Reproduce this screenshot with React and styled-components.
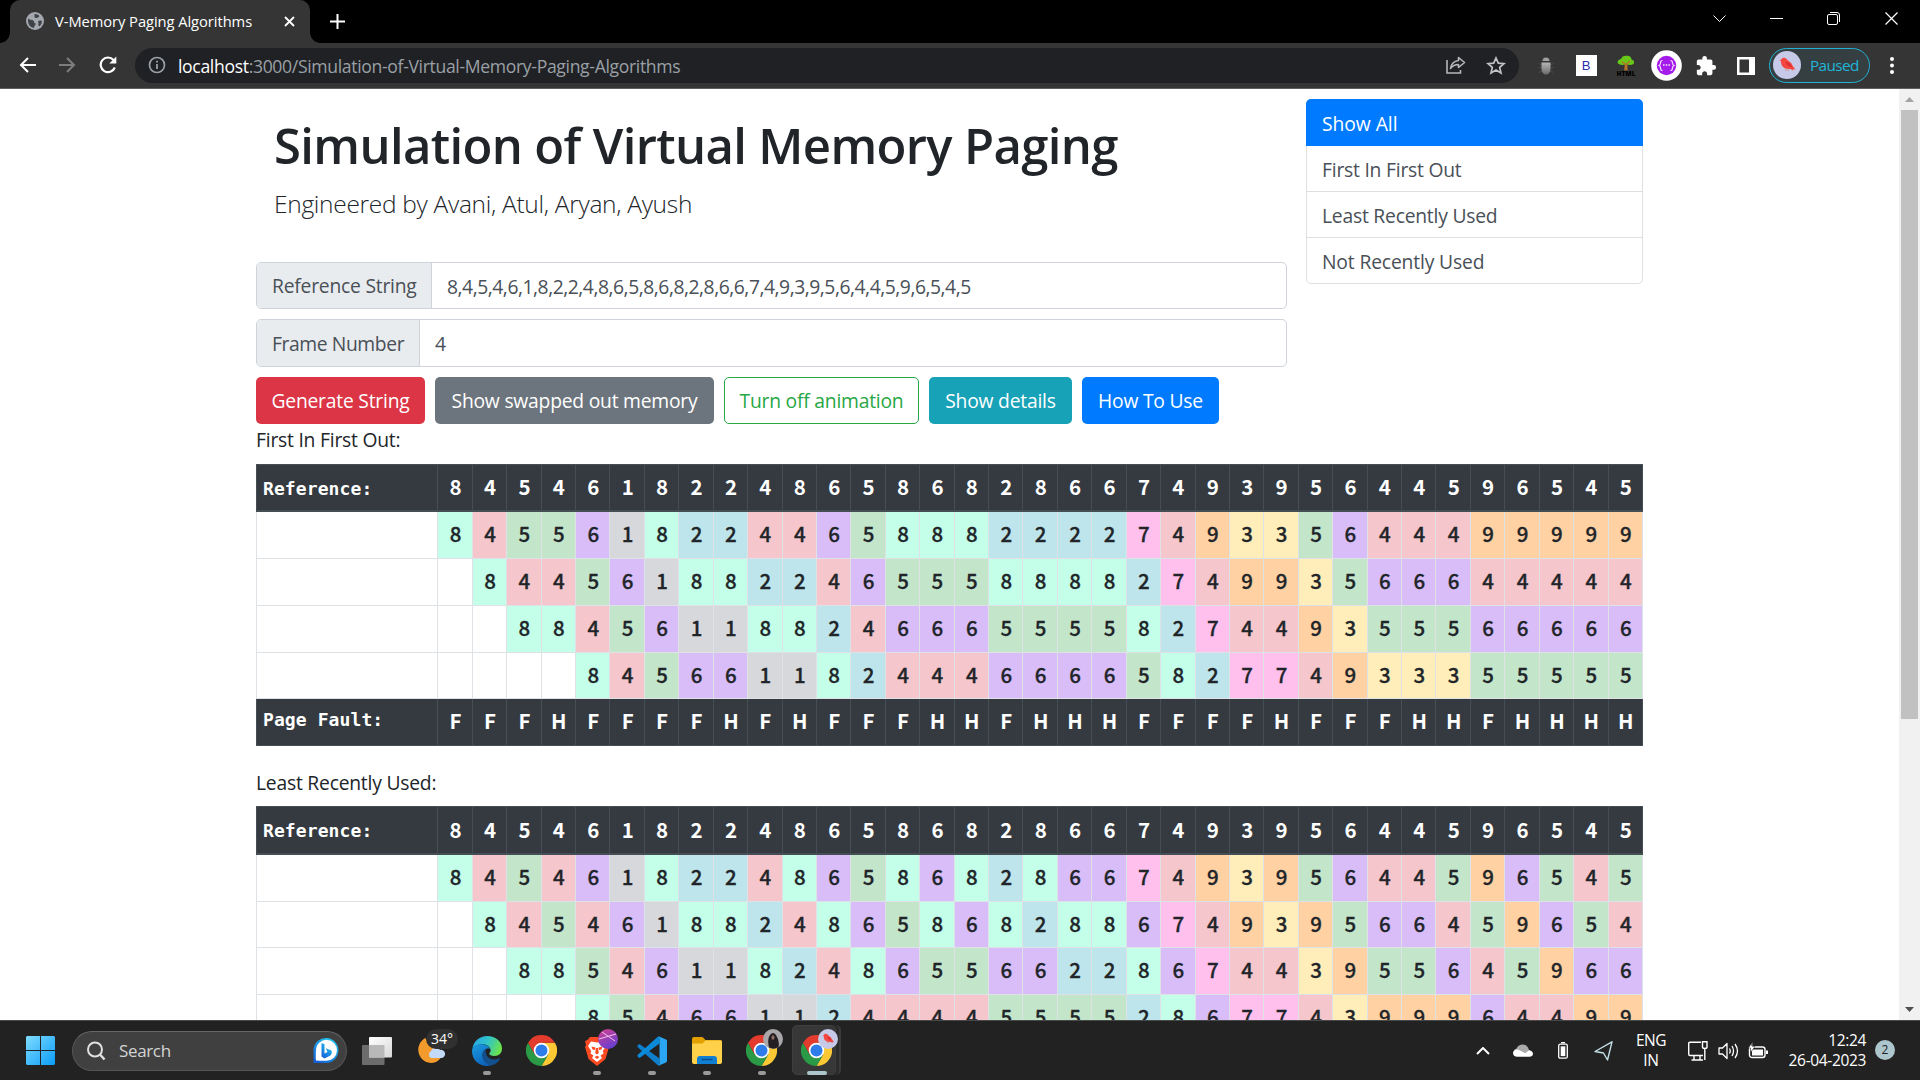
import React from "react";
import styled, { createGlobalStyle, css } from "styled-components";

const Global = createGlobalStyle`
  *, *::before, *::after { box-sizing: border-box; }
  html, body { margin: 0; padding: 0; overflow: hidden; background: #fff; }
  body { font-family: "Open Sans", "Noto Sans", sans-serif; color: #212529; }
  svg { display: block; flex: none; }
`;

const Screen = styled.div`
  width: 1920px;
  height: 1080px;
  display: flex;
  flex-direction: column;
  overflow: hidden;
`;

/* Single-line text with its own size and tracking */
const Label = styled.span`
  white-space: nowrap;
  font-size: ${(p) => p.$size || 19.3}px;
  letter-spacing: ${(p) => p.$track ?? -0.22}px;
`;

/* ---------- browser chrome ---------- */

const TabStrip = styled.div`
  height: 43px;
  background: #000;
  display: flex;
  justify-content: space-between;
  flex: none;
`;

const TabGroup = styled.div`
  display: flex;
  padding-left: 10px;
`;

const Tab = styled.div`
  width: 300px;
  height: 43px;
  background: #353535;
  border-radius: 10px 10px 0 0;
  display: flex;
  align-items: center;
  padding: 0 15px 1px 16px;
  position: relative;
  color: #fff;
  &::before, &::after {
    content: "";
    position: absolute;
    bottom: 0;
    width: 10px;
    height: 10px;
  }
  &::before { left: -10px; background: radial-gradient(circle at 0 0, #000 9.5px, #353535 10px); }
  &::after { right: -10px; background: radial-gradient(circle at 100% 0, #000 9.5px, #353535 10px); }
`;

const TabTitle = styled(Label)`
  margin-left: 11px;
  flex: 1;
`;

const NewTab = styled.div`
  width: 54px;
  display: flex;
  align-items: center;
  justify-content: center;
  padding-bottom: 1px;
`;

const WindowButtons = styled.div`
  display: flex;
  height: 37px;
`;

const WindowButton = styled.div`
  width: ${(p) => p.$w || 57}px;
  display: flex;
  align-items: center;
  justify-content: center;
`;

const Toolbar = styled.div`
  height: 46px;
  background: #353535;
  border-bottom: 1px solid #5f5f5f;
  display: flex;
  align-items: center;
  flex: none;
  padding-left: 7px;
`;

const NavButton = styled.div`
  width: 40px;
  display: flex;
  justify-content: center;
  padding-bottom: 1px;
  &:nth-child(3) { width: 42px; }
`;

const Omnibox = styled.div`
  width: 1384px;
  height: 35px;
  margin-left: 6px;
  border-radius: 18px;
  background: #202124;
  display: flex;
  align-items: center;
  padding: 0 12px 1px 13px;
`;

const Url = styled(Label)`
  margin: 1px 0 0 12px;
  flex: 1;
  color: #9aa0a6;
  b { font-weight: 400; color: #fff; }
`;

const OmniIcon = styled.div`
  width: 40px;
  display: flex;
  justify-content: center;
  &:last-child { width: 23px; margin-left: 8px; }
`;

const Extensions = styled.div`
  display: flex;
  padding-left: 7px;
`;

const Extension = styled.div`
  width: 40px;
  height: 34px;
  display: flex;
  align-items: center;
  justify-content: center;
`;

const BootstrapTile = styled.div`
  width: 21px;
  height: 21px;
  background: #fff;
  color: #2a2fb0;
  font: 400 13px/21px "Liberation Sans", sans-serif;
  text-align: center;
`;

const Profile = styled.div`
  width: 101px;
  height: 35px;
  margin-left: 3px;
  border: 1px solid #22b1d3;
  border-radius: 18px;
  background: #353f42;
  display: flex;
  align-items: center;
  padding: 0 0 1px 3px;
  color: #22b5d8;
`;

const ProfileText = styled(Label)`
  margin: 0 0 1px 9px;
`;

const MenuSlot = styled.div`
  width: 44px;
  display: flex;
  justify-content: center;
`;

/* ---------- page ---------- */

const Viewport = styled.div`
  height: 931px;
  display: flex;
  overflow: hidden;
  flex: none;
`;

const Page = styled.main`
  width: 1899px;
  padding: 10px 256px 0;
  height: 931px;
  overflow: hidden;
`;

const TopRow = styled.div`
  display: flex;
  justify-content: space-between;
  width: 1387px;
`;

const MainColumn = styled.div`
  width: 1031px;
`;

const Heading = styled.div`
  height: 163px;
  padding: 16px 0 0 18px;
`;

const Title = styled.h1`
  margin: 0;
  font-size: 49px;
  line-height: 60px;
  font-weight: 600;
  white-space: nowrap;
  letter-spacing: -0.64px;
`;

const Subtitle = styled.div`
  font-size: 24.5px;
  line-height: 36px;
  margin-top: 11px;
  font-weight: 300;
  white-space: nowrap;
  letter-spacing: -0.3px;
`;

const InputGroup = styled.div`
  display: flex;
  height: ${(p) => p.$h}px;
  margin-bottom: ${(p) => p.$gap}px;
  border: 1px solid #ced4da;
  border-radius: 5px;
  overflow: hidden;
  color: #495057;
`;

const InputLabel = styled.div`
  width: ${(p) => p.$w}px;
  background: #e9ecef;
  border-right: 1px solid #ced4da;
  display: flex;
  align-items: center;
  padding: 0 0 0 15px;
`;

const InputValue = styled.div`
  flex: 1;
  display: flex;
  align-items: center;
  padding: 1px 0 0 15px;
`;

const ButtonRow = styled.div`
  display: flex;
  gap: 10px;
`;

const Button = styled.div`
  width: ${(p) => p.$w}px;
  height: 47px;
  border-radius: 5px;
  display: flex;
  align-items: center;
  justify-content: center;
  padding-bottom: 1px;
  color: #fff;
  background: ${(p) => p.$bg};
  ${(p) =>
    p.$outline &&
    css`
      background: #fff;
      color: #28a745;
      border: 1px solid #28a745;
    `}
`;

const ListGroup = styled.div`
  width: 337px;
  height: 185px;
  border: 1px solid #dfdfdf;
  border-radius: 5px;
`;

const ListItem = styled.div`
  height: 46px;
  padding: 2px 0 0 15px;
  display: flex;
  align-items: center;
  color: #495057;
  border-bottom: 1px solid #dfdfdf;
  ${(p) =>
    p.$active &&
    css`
      height: 47px;
      margin: -1px -1px 0;
      padding-left: 16px;
      background: #007bff;
      color: #fff;
      border-color: #007bff;
      border-radius: 5px 5px 0 0;
    `}
  &:last-child { border-bottom: 0; padding-top: 0; }
`;

const SectionTitle = styled.div`
  height: ${(p) => p.$h}px;
  padding-top: ${(p) => p.$top}px;
  line-height: 30px;
`;

const Table = styled.div`
  width: 1387px;
  border-left: 1px solid #dee2e6;
`;

const Row = styled.div`
  display: grid;
  grid-template-columns: 181.4px repeat(35, 1fr);
  height: ${(p) => p.$h}px;
  ${(p) =>
    p.$dark &&
    css`
      background: #343a40;
      color: #fff;
      margin-left: -1px;
      border-left: 1px solid #454d55;
    `}
  ${(p) => p.$head && css`border-top: 1px solid #454d55;`}
`;

const fills = {
  1: "#d6d8db",
  2: "#bee5eb",
  3: "#ffeeba",
  4: "#f5c6cb",
  5: "#c3e6cb",
  6: "#d9bdf8",
  7: "#ffc0ee",
  8: "#c3ffe9",
  9: "#ffd1a3",
};

const Cell = styled.div`
  display: flex;
  align-items: center;
  justify-content: center;
  padding: 0 0 ${(p) => (p.$thick ? 3 : 4)}px 1px;
  font: ${(p) => (p.$dark ? 700 : 500)} 20.5px/24px "Noto Sans CJK JP", "Noto Sans CJK SC", sans-serif;
  -webkit-text-stroke: ${(p) => (p.$dark ? 0 : 0.3)}px currentColor;
  background: ${(p) => fills[p.$page] || "transparent"};
  border-right: 1px solid ${(p) => (p.$dark ? "#454d55" : "#dee2e6")};
  border-bottom: ${(p) => (p.$thick ? 2 : 1)}px solid ${(p) => (p.$dark ? "#454d55" : "#dee2e6")};
`;

const RowLabel = styled(Cell)`
  justify-content: flex-start;
  padding: ${(p) => (p.$thick ? "2px 0 0 6px" : "0 0 4px 6px")};
  font: 700 18px/24px "DejaVu Sans Mono", monospace;
  letter-spacing: 0.1px;
  white-space: pre;
`;

const Scrollbar = styled.div`
  width: 21px;
  background: #f1f1f1;
  display: flex;
  flex-direction: column;
  align-items: center;
  justify-content: space-between;
`;

const ScrollArrow = styled.div`
  height: 21px;
  display: flex;
  align-items: center;
`;

const ScrollTrack = styled.div`
  flex: 1;
  width: 17px;
`;

const Thumb = styled.div`
  height: 609px;
  background: #c1c1c1;
`;

/* ---------- taskbar ---------- */

const Taskbar = styled.div`
  height: 60px;
  background: #222222;
  border-top: 1px solid #484a4a;
  display: flex;
  justify-content: space-between;
  flex: none;
`;

const TaskLeft = styled.div`
  display: flex;
  align-items: center;
  padding-left: 26px;
`;

const SearchBox = styled.div`
  width: 275px;
  height: 40px;
  margin: 0 2px 0 17px;
  border: 1px solid #555;
  border-top-color: #666;
  border-radius: 20px;
  background: #404040;
  display: flex;
  align-items: center;
  padding: 0 7px 0 13px;
  color: #d4d4d4;
`;

const SearchText = styled(Label)`
  margin-left: 13px;
  flex: 1;
`;

const TaskItem = styled.div`
  width: 55px;
  height: 59px;
  display: flex;
  align-items: center;
  justify-content: center;
  position: relative;
`;

const ActiveTile = styled.div`
  position: absolute;
  left: 3px;
  top: 4px;
  width: 49px;
  height: 50px;
  border-radius: 5px;
  background: #2b2b2b;
  border-right: 2px solid #3a3a3a;
  & + svg { position: relative; }
  &::before {
    content: "";
    position: absolute;
    left: 0;
    top: 0;
    width: 44px;
    height: 50px;
    border-radius: 5px;
    background: #373737;
    border: 1px solid #3e3e3e;
  }
`;

const Running = styled.div`
  position: absolute;
  bottom: 5px;
  left: 50%;
  transform: translateX(-50%);
  width: ${(p) => (p.$active ? 20 : 8)}px;
  height: 4px;
  border-radius: 2px;
  background: ${(p) => (p.$active ? "#adc6cd" : "#9a9a9a")};
`;

const Corner = styled.div`
  position: absolute;
  left: 29px;
  top: 8px;
`;

const WeatherBadge = styled.div`
  position: absolute;
  left: 22px;
  top: 8px;
  width: 32px;
  height: 20px;
  border-radius: 10px;
  background: #303030;
  color: #fff;
  font-size: 14px;
  line-height: 20px;
  text-align: center;
`;

const Tray = styled.div`
  display: flex;
  align-items: center;
  padding-right: 25px;
  color: #fff;
`;

const TrayIcon = styled.div`
  width: ${(p) => p.$w || 40}px;
  display: flex;
  justify-content: center;
`;

const TrayText = styled.div`
  width: ${(p) => p.$w}px;
  display: flex;
  flex-direction: column;
  align-items: ${(p) => p.$align || "center"};
  line-height: 20px;
  padding-bottom: 1px;
`;

const Notice = styled.div`
  width: 20px;
  height: 20px;
  margin: 0 0 1px 9px;
  border-radius: 50%;
  background: #adc6cd;
  color: #222;
  font-size: 12px;
  line-height: 20px;
  text-align: center;
`;

/* ---------- drawings ---------- */

const Bird = ({ size, bg = "#c6cae8" }) => (
  <svg width={size} height={size} viewBox="0 0 28 28">
    <circle cx="14" cy="14" r="14" fill={bg} />
    <path d="M6.500 9.500 L8 8.800 Q9 6.300 11.500 6.800 Q13.500 7.500 15 9.500 Q18.500 11.500 19.500 14.500 L22.500 18.500 L20 18 L20.500 19.800 L17.500 18 Q12 18.500 9.500 15.500 Q7.800 13 8 10.300 Z" fill="#f5463f" />
    <path d="M12.500 10.500 Q17.500 11.500 19 16 Q14 15.500 12.500 10.500 Z" fill="#d93036" />
    <path d="M13 18 V20 M15 18 V20" stroke="#d98a70" strokeWidth="0.800" />
  </svg>
);

const Chrome = () => (
  <svg width="31" height="31" viewBox="0 0 48 48">
    <path d="M24 12 H44.800 A24 24 0 0 1 24 48 L34.400 30 Z" fill="#fcc934" />
    <path d="M3.200 12 L13.600 30 L24 36 L34.400 30 L24 48 A24 24 0 0 1 3.200 12 Z" fill="#2b9a46" />
    <path d="M3.200 12 A24 24 0 0 1 44.800 12 H24 L13.600 30 Z" fill="#e33b2e" />
    <circle cx="24" cy="24" r="12" fill="#fff" />
    <circle cx="24" cy="24" r="9.300" fill="#2e7cea" />
  </svg>
);

const Edge = () => (
  <svg width="30" height="30" viewBox="0 0 30 30">
    <defs>
      <linearGradient id="edgeTop" x1="0" y1="0.200" x2="1" y2="0.500">
        <stop offset="0" stopColor="#27a5e8" />
        <stop offset="0.500" stopColor="#31c4c8" />
        <stop offset="1" stopColor="#6be34a" />
      </linearGradient>
      <linearGradient id="edgeSide" x1="0" y1="0" x2="0.600" y2="1">
        <stop offset="0" stopColor="#1b9de2" />
        <stop offset="1" stopColor="#0d62bb" />
      </linearGradient>
    </defs>
    <path d="M0.300 13 C1.500 5 8 0 15 0 C24 0 30 6 30 12.500 C30 17 27 20 22.500 20 C19 20 17.300 18.800 17.300 17.800 C17.300 17 18.600 16.500 18.600 14.500 C18.600 11 15 8.300 10.500 8.300 C5 8.300 1 11 0.300 13 Z" fill="url(#edgeTop)" />
    <path d="M0 15 C0 11 4 8.300 9.500 8.300 C14 8.300 17 10.500 18.300 13 C15 11.500 10.500 14 10.500 19 C10.500 24 14 28 19 29.300 C17.500 29.900 16 30 15 30 C6.500 30 0 23.500 0 15 Z" fill="url(#edgeSide)" />
    <path d="M10.500 19 C10.500 15.500 12.500 13.600 14 13 C12.500 18 16 23.500 22 23.500 C25 23.500 26.500 22.600 27.600 22.200 C28.200 22 28.400 22.600 28 23 C26 26.500 22.500 29 19 29.600 C14 28.500 10.500 24 10.500 19 Z" fill="#12508f" />
  </svg>
);

const Brave = () => (
  <svg width="26" height="30" viewBox="0 0 26 30">
    <path d="M6 1 H20 L22.500 4 L25 5 L24 9 L25 11 L21.500 23 L13 30 L4.500 23 L1 11 L2 9 L1 5 L3.500 4 Z" fill="#fb4a22" />
    <path d="M13 6.500 L19 5.600 L22 10 L18.800 15 L19.500 17.500 L16.500 19.500 L18 22 L13 26 L8 22 L9.500 19.500 L6.500 17.500 L7.200 15 L4 10 L7 5.600 Z" fill="#fff" />
    <path d="M7.500 10.500 L11.500 11.500 L11 14 L8.500 13.500 Z M18.500 10.500 L14.500 11.500 L15 14 L17.500 13.500 Z M12 12 H14 L14.800 17 L13 18.500 L11.200 17 Z M10.500 21 L13 19.800 L15.500 21 L13 23 Z" fill="#fb4a22" />
  </svg>
);

const PurpleBall = () => (
  <svg width="20" height="20" viewBox="0 0 20 20">
    <defs>
      <linearGradient id="ball" x1="0" y1="0" x2="0.500" y2="1">
        <stop offset="0" stopColor="#d6418f" />
        <stop offset="1" stopColor="#6a3fd0" />
      </linearGradient>
    </defs>
    <circle cx="10" cy="10" r="10" fill="url(#ball)" />
    <path d="M1 10 L18 5 M4 3 L17 12" stroke="#f3c2e6" strokeWidth="1" fill="none" />
  </svg>
);

const VSCode = () => (
  <svg width="30" height="30" viewBox="0 0 30 30">
    <path d="M0.500 9.500 L2.500 8 L22.500 22.500 V29.500 L20.800 29.200 L0.500 11 Z" fill="#0f7fcb" />
    <path d="M0.500 20.500 L2.500 22 L22.500 7.500 V0.500 L20.800 0.800 L0.500 19 Z" fill="#0a8ad8" />
    <path d="M21.500 0.200 L29 3.600 Q30 4 30 5 V25 Q30 26 29 26.400 L21.500 29.800 Q22.500 29 22.500 27.500 V2.500 Q22.500 1 21.500 0.200 Z" fill="#2aa6f2" />
  </svg>
);

const Folder = () => (
  <svg width="30" height="27" viewBox="0 0 30 27">
    <path d="M0 2 Q0 0 2 0 H10 Q11 0 12 1.500 L13.500 3 H28 Q30 3 30 5 V10 H0 Z" fill="#e2a100" />
    <path d="M0 6.500 H10.500 L13.500 3.500 H29 Q30 3.500 30 4.500 V25 Q30 27 28 27 H2 Q0 27 0 25 Z" fill="#ffd04a" />
    <path d="M5 27 V22 Q5 19 8 19 H22 Q25 19 25 22 V27 Z" fill="#1180d2" />
    <path d="M9.500 22.500 H20.500" stroke="#0b4f92" strokeWidth="1.500" />
  </svg>
);

const Portrait = () => (
  <svg width="20" height="20" viewBox="0 0 20 20">
    <circle cx="10" cy="10" r="10" fill="#a9a7aa" />
    <path d="M6 18.500 Q4 10 7 6 Q10 2 13 6 Q17 12 15.500 18 Q11 21 6 18.500 Z" fill="#241f22" />
    <ellipse cx="10" cy="8.500" rx="1.500" ry="2.200" fill="#8f7064" />
  </svg>
);

const Bing = () => (
  <svg width="26" height="26" viewBox="0 0 26 26">
    <defs>
      <linearGradient id="bing" x1="0.800" y1="0" x2="0.200" y2="1">
        <stop offset="0" stopColor="#22c7ee" />
        <stop offset="1" stopColor="#1560d8" />
      </linearGradient>
    </defs>
    <path d="M0.500 25 V11.500 A12.500 12.500 0 1 1 13 25 Z" fill="url(#bing)" />
    <path d="M3 22.500 Q2.500 20 3 12 A10.500 10.500 0 1 1 13 22.800 Q8 23 3 22.500 Z" fill="#fff" />
    <path d="M8.500 5 L11.500 6.200 V15.500 L14.500 14 L12.800 10.300 L18.500 12.500 Q19.500 16 17 17.800 L11.500 20.500 L8.500 18.500 Z" fill="url(#bing)" />
  </svg>
);

const Globe = () => (
  <svg width="18" height="18" viewBox="0 0 18 18">
    <circle cx="9" cy="9" r="9" fill="#a3a8ae" />
    <path d="M2 6.500 Q4 8 6.500 8 Q8.500 8.500 8 10.500 Q10 11 9.500 12.500 Q8 14 8 16 Q2.500 15 2 9 Z M8.500 2 Q12 2 13.500 4 Q12 6.500 9.500 6 Q8 5 8.500 2 Z M12 9 Q14.500 8 16 9 Q16 12 13.500 14.500 Q11.500 13 12.500 11 Z" fill="#3f4246" />
  </svg>
);

const stroke = { fill: "none", stroke: "#fff", strokeWidth: 2 };

const PuzzlePiece = () => (
  <svg width="22" height="22" viewBox="0 0 24 24" fill="#fff">
    <path d="M20.500 11H19V7c0-1.100-.900-2-2-2h-4V3.500a2.500 2.500 0 0 0-5 0V5H4c-1.100 0-1.990.900-1.990 2v3.800H3.500c1.490 0 2.700 1.210 2.700 2.700s-1.210 2.700-2.700 2.700H2V20c0 1.100.900 2 2 2h3.800v-1.500c0-1.490 1.210-2.700 2.700-2.700 1.490 0 2.700 1.210 2.700 2.700V22H17c1.100 0 2-.900 2-2v-4h1.500a2.500 2.500 0 0 0 0-5z" />
  </svg>
);

function Browser() {
  return (
    <>
      <TabStrip>
        <TabGroup>
          <Tab>
            <Globe />
            <TabTitle $size={14.7} $track={-0.05}>V-Memory Paging Algorithms</TabTitle>
            <svg width="11" height="11" viewBox="0 0 11 11"><path d="M1 1 L10 10 M10 1 L1 10" {...stroke} strokeWidth="1.800" /></svg>
          </Tab>
          <NewTab>
            <svg width="15" height="15" viewBox="0 0 15 15"><path d="M7.500 0 V15 M0 7.500 H15" {...stroke} /></svg>
          </NewTab>
        </TabGroup>
        <WindowButtons>
          <WindowButton $w={58}><svg width="13" height="7" viewBox="0 0 13 7"><path d="M0.500 0.500 L6.500 6.500 L12.500 0.500" {...stroke} strokeWidth="1" /></svg></WindowButton>
          <WindowButton><svg width="13" height="1" viewBox="0 0 13 1"><path d="M0 0.500 H13" {...stroke} strokeWidth="1" /></svg></WindowButton>
          <WindowButton>
            <svg width="13" height="13" viewBox="0 0 13 13">
              <rect x="0.500" y="2.500" width="10" height="10" rx="1.500" {...stroke} strokeWidth="1" />
              <path d="M3 0.500 H10 Q12.500 0.500 12.500 3 V10" {...stroke} strokeWidth="1" />
            </svg>
          </WindowButton>
          <WindowButton $w={58}><svg width="13" height="13" viewBox="0 0 13 13"><path d="M0.500 0.500 L12.500 12.500 M12.500 0.500 L0.500 12.500" {...stroke} strokeWidth="1.200" /></svg></WindowButton>
        </WindowButtons>
      </TabStrip>
      <Toolbar>
        <NavButton><svg width="17" height="16" viewBox="0 0 17 16"><path d="M17 8 H2 M9 1 L2 8 L9 15" {...stroke} /></svg></NavButton>
        <NavButton><svg width="17" height="16" viewBox="0 0 17 16"><path d="M0 8 H15 M8 1 L15 8 L8 15" {...stroke} stroke="#7d7d7d" /></svg></NavButton>
        <NavButton>
          <svg width="18" height="18" viewBox="0 0 18 18">
            <path d="M15.800 11.500 A7.300 7.300 0 1 1 14.500 4" {...stroke} strokeWidth="2.200" />
            <path d="M17.300 0.500 V7.500 H10.300 Z" fill="#fff" />
          </svg>
        </NavButton>
        <Omnibox>
          <svg width="18" height="18" viewBox="0 0 18 18">
            <circle cx="9" cy="9" r="7.500" fill="none" stroke="#9aa0a6" strokeWidth="1.700" />
            <path d="M9 8 V13 M9 4.800 V6.600" stroke="#9aa0a6" strokeWidth="1.800" />
          </svg>
          <Url $size={17.6} $track={-0.34}><b>localhost</b>:3000/Simulation-of-Virtual-Memory-Paging-Algorithms</Url>
          <OmniIcon>
            <svg width="20" height="18" viewBox="0 0 20 18" fill="none" stroke="#b5b7b9" strokeWidth="1.600">
              <path d="M1 4 V17 H14.500 V14" />
              <path d="M12.500 1.500 L18.500 6.500 L12.500 11.500 V8.500 Q7.500 8.500 4.500 12.500 Q5.500 5.500 12.500 4.500 Z" strokeLinejoin="round" />
            </svg>
          </OmniIcon>
          <OmniIcon>
            <svg width="20" height="19" viewBox="0 0 20 19" fill="none" stroke="#c0c2c4" strokeWidth="1.700">
              <path d="M10 2 L12.300 7.200 L18 7.700 L13.700 11.400 L15 17 L10 14 L5 17 L6.300 11.400 L2 7.700 L7.700 7.200 Z" />
            </svg>
          </OmniIcon>
        </Omnibox>
        <Extensions>
          <Extension>
            <svg width="16" height="18" viewBox="0 0 16 18">
              <defs>
                <linearGradient id="bug" x1="0" y1="0" x2="0" y2="1">
                  <stop offset="0" stopColor="#b5b5b5" />
                  <stop offset="1" stopColor="#6a6a6a" />
                </linearGradient>
              </defs>
              <path d="M0.500 6.500 L4 8 M15.500 6.500 L12 8 M0 10.500 H4 M16 10.500 H12 M1 15.500 L4 13.500 M15 15.500 L12 13.500" stroke="#484848" strokeWidth="1.200" />
              <path d="M4.500 4 A3.500 3.500 0 0 1 11.500 4 Z" fill="#a0a0a0" />
              <path d="M3.500 5.500 H12.500 V12 A4.500 5.500 0 0 1 3.500 12 Z" fill="url(#bug)" />
            </svg>
          </Extension>
          <Extension><BootstrapTile>B</BootstrapTile></Extension>
          <Extension>
            <svg width="20" height="21" viewBox="0 0 20 21">
              <path d="M2 8.500 Q0.500 5 5 4 Q6.500 0 11 0.800 Q15 0.500 15.500 4.500 Q19.500 6 17.500 9 Q14 11 10 9 Q5 11 2 8.500 Z" fill="#68c818" />
              <path d="M9 15.500 L9.500 9.500 L6 6.500 M10.800 15.500 L10.600 9 L14 6" stroke="#b6742a" strokeWidth="1.600" fill="none" />
              <text x="10" y="20.500" textAnchor="middle" fontFamily="Open Sans" fontWeight="800" fontSize="7" textLength="19" lengthAdjust="spacingAndGlyphs">HTML</text>
            </svg>
          </Extension>
          <Extension>
            <svg width="31" height="31" viewBox="0 0 31 31">
              <circle cx="15.500" cy="15.500" r="15.300" fill="#fff" />
              <circle cx="15.500" cy="15.500" r="9.700" fill="#a41bea" />
              <path d="M11.500 10.500 Q9.500 10.500 9.500 13 Q9.500 14.800 8 15.500 Q9.500 16 9.500 18 Q9.500 20.500 11.500 20.500 M19.500 10.500 Q21.500 10.500 21.500 13 Q21.500 14.800 23 15.500 Q21.500 16 21.500 18 Q21.500 20.500 19.500 20.500" stroke="#f3dcfc" strokeWidth="1.200" fill="none" />
              <path d="M12 15 H19" stroke="#f3dcfc" strokeWidth="1.500" strokeDasharray="1.600 1.100" />
            </svg>
          </Extension>
          <Extension><PuzzlePiece /></Extension>
          <Extension>
            <svg width="18" height="18" viewBox="0 0 18 18">
              <path fillRule="evenodd" d="M0 0 H18 V18 H0 Z M2.500 2.500 V15.500 H12 V2.500 Z" fill="#fff" />
            </svg>
          </Extension>
        </Extensions>
        <Profile>
          <Bird size={28} />
          <ProfileText $size={15.3} $track={-0.6}>Paused</ProfileText>
        </Profile>
        <MenuSlot>
          <svg width="4" height="17" viewBox="0 0 4 17" fill="#fff"><circle cx="2" cy="2" r="2" /><circle cx="2" cy="8.500" r="2" /><circle cx="2" cy="15" r="2" /></svg>
        </MenuSlot>
      </Toolbar>
    </>
  );
}

/* ---------- paging simulation ---------- */

const references = "8,4,5,4,6,1,8,2,2,4,8,6,5,8,6,8,2,8,6,6,7,4,9,3,9,5,6,4,4,5,9,6,5,4,5";
const pages = references.split(",");
const frameCount = 4;

function simulate(recency) {
  let frames = [];
  return pages.map((page) => {
    const hit = frames.includes(page);
    if (!hit) frames = [page, ...frames].slice(0, frameCount);
    else if (recency) frames = [page, ...frames.filter((f) => f !== page)];
    return { frames, mark: hit ? "H" : "F" };
  });
}

function PagingTable({ recency, heights }) {
  const steps = simulate(recency);
  return (
    <Table>
      <Row $h={heights[0]} $dark $head>
        <RowLabel $dark $thick>Reference:</RowLabel>
        {pages.map((p, i) => <Cell key={i} $dark $thick>{p}</Cell>)}
      </Row>
      {Array.from({ length: frameCount }, (_, f) => (
        <Row key={f} $h={heights[f + 1]}>
          <Cell />
          {steps.map((s, i) => <Cell key={i} $page={s.frames[f]}>{s.frames[f]}</Cell>)}
        </Row>
      ))}
      {heights.length > 5 && (
        <Row $h={heights[5]} $dark>
          <RowLabel $dark>Page Fault:</RowLabel>
          {steps.map((s, i) => <Cell key={i} $dark>{s.mark}</Cell>)}
        </Row>
      )}
    </Table>
  );
}

function Content() {
  return (
    <Viewport>
      <Page>
        <TopRow>
          <MainColumn>
            <Heading>
              <Title>Simulation of Virtual Memory Paging</Title>
              <Subtitle>Engineered by Avani, Atul, Aryan, Ayush</Subtitle>
            </Heading>
            <InputGroup $h={47} $gap={10}>
              <InputLabel $w={175}><Label>Reference String</Label></InputLabel>
              <InputValue><Label $track={-0.46}>{references}</Label></InputValue>
            </InputGroup>
            <InputGroup $h={48} $gap={10}>
              <InputLabel $w={163}><Label $track={-0.4}>Frame Number</Label></InputLabel>
              <InputValue><Label>4</Label></InputValue>
            </InputGroup>
            <ButtonRow>
              <Button $w={169} $bg="#dc3545"><Label>Generate String</Label></Button>
              <Button $w={279} $bg="#6c757d"><Label>Show swapped out memory</Label></Button>
              <Button $w={195} $outline><Label>Turn off animation</Label></Button>
              <Button $w={143} $bg="#17a2b8"><Label>Show details</Label></Button>
              <Button $w={137} $bg="#007bff"><Label>How To Use</Label></Button>
            </ButtonRow>
          </MainColumn>
          <ListGroup>
            <ListItem $active><Label $track={-0.05}>Show All</Label></ListItem>
            <ListItem><Label>First In First Out</Label></ListItem>
            <ListItem><Label>Least Recently Used</Label></ListItem>
            <ListItem><Label $track={-0.15}>Not Recently Used</Label></ListItem>
          </ListGroup>
        </TopRow>
        <SectionTitle $h={40} $top={1}><Label>First In First Out:</Label></SectionTitle>
        <PagingTable heights={[48, 47, 47, 47, 46, 47]} />
        <SectionTitle $h={60} $top={22}><Label>Least Recently Used:</Label></SectionTitle>
        <PagingTable recency heights={[49, 47, 46, 47, 47]} />
      </Page>
      <Scrollbar>
        <ScrollArrow><svg width="9" height="5" viewBox="0 0 9 5"><path d="M0 5 L4.500 0 L9 5 Z" fill="#a3a3a3" /></svg></ScrollArrow>
        <ScrollTrack><Thumb /></ScrollTrack>
        <ScrollArrow><svg width="9" height="5" viewBox="0 0 9 5"><path d="M0 0 L4.500 5 L9 0 Z" fill="#505050" /></svg></ScrollArrow>
      </Scrollbar>
    </Viewport>
  );
}

function WindowsBar() {
  return (
    <Taskbar>
      <TaskLeft>
        <svg width="29" height="29" viewBox="0 0 29 29">
          <defs>
            <linearGradient id="win" x1="0" y1="0" x2="1" y2="1">
              <stop offset="0" stopColor="#7fdcff" />
              <stop offset="1" stopColor="#0a9cf8" />
            </linearGradient>
          </defs>
          <path d="M1 0 H14 V14 H0 V1 Z M15 0 H28 L29 1 V14 H15 Z M0 15 H14 V29 H1 L0 28 Z M15 15 H29 V28 L28 29 H15 Z" fill="url(#win)" />
        </svg>
        <SearchBox>
          <svg width="20" height="20" viewBox="0 0 20 20" fill="none" stroke="#e0e0e0" strokeWidth="2">
            <circle cx="9" cy="8.500" r="7" />
            <path d="M14 13.500 L18.500 18.500" strokeWidth="2.500" />
          </svg>
          <SearchText $size={17} $track={-0.35}>Search</SearchText>
          <Bing />
        </SearchBox>
        <TaskItem>
          <svg width="30" height="28" viewBox="0 0 30 28">
            <defs><linearGradient id="tv" x1="0" y1="0" x2="1" y2="1"><stop offset="0" stopColor="#fff" /><stop offset="1" stopColor="#d8d8d8" /></linearGradient></defs>
            <rect x="0" y="8" width="22.500" height="20" rx="1" fill="#6c6c6c" />
            <rect x="7" y="0" width="23" height="20.500" rx="1" fill="url(#tv)" />
            <path d="M7 8 H22.500 V20.500 H7 Z" fill="#b9b9b9" />
          </svg>
        </TaskItem>
        <TaskItem>
          <svg width="28" height="27" viewBox="0 0 28 27">
            <path d="M7 1 Q14 9 24 16 Q24 22 18 25 Q9 28 3 21 Q-2 14 2 6 Q4 3 7 1 Z" fill="#f39a2c" />
            <path d="M13 21 A4 4 0 0 1 13 14 A5 5 0 0 1 22 13 A4 4 0 0 1 24 21 Z" fill="#c2daf7" />
          </svg>
          <WeatherBadge>34°</WeatherBadge>
        </TaskItem>
        <TaskItem><Edge /><Running /></TaskItem>
        <TaskItem><Chrome /></TaskItem>
        <TaskItem><Brave /><Corner><PurpleBall /></Corner><Running /></TaskItem>
        <TaskItem><VSCode /><Running /></TaskItem>
        <TaskItem><Folder /><Running /></TaskItem>
        <TaskItem><Chrome /><Corner><Portrait /></Corner><Running /></TaskItem>
        <TaskItem><ActiveTile /><Chrome /><Corner><Bird size={20} /></Corner><Running $active /></TaskItem>
      </TaskLeft>
      <Tray>
        <TrayIcon><svg width="14" height="8" viewBox="0 0 14 8"><path d="M1 7 L7 1 L13 7" {...stroke} /></svg></TrayIcon>
        <TrayIcon>
          <svg width="20" height="13" viewBox="0 0 20 13">
            <path d="M3 12 A4 4 0 0 1 3.500 4.500 A6.500 6.500 0 0 1 15 3.500 L16 6 L8 12 Z" fill="#a9a9a9" />
            <path d="M4.500 12.800 Q0 12.500 0 9 Q0.500 5 5 5.500 L12 9 L16 6 Q20 7 20 10 Q19.500 12.800 16.500 12.800 Z" fill="#fff" />
          </svg>
        </TrayIcon>
        <TrayIcon>
          <svg width="10" height="17" viewBox="0 0 10 17">
            <path d="M3 0.700 H7" stroke="#fff" strokeWidth="1.400" />
            <rect x="0.700" y="2.200" width="8.600" height="14" rx="1.500" {...stroke} strokeWidth="1.300" />
            <rect x="2.700" y="4.300" width="4.600" height="9.800" fill="#fff" />
          </svg>
        </TrayIcon>
        <TrayIcon>
          <svg width="19" height="20" viewBox="0 0 19 20"><path d="M18 0.800 L1 10.500 L9.500 12 L13.500 19 Z" fill="none" stroke="#c3dfe8" strokeWidth="1.400" strokeLinejoin="round" /></svg>
        </TrayIcon>
        <TrayText $w={56}>
          <Label $size={15.5} $track={-0.5}>ENG</Label>
          <Label $size={15.5} $track={-0.2}>IN</Label>
        </TrayText>
        <TrayIcon $w={38}>
          <svg width="20" height="20" viewBox="0 0 20 20" fill="none" stroke="#fff" strokeWidth="1.400">
            <path d="M13 1.200 H2 Q0.700 1.200 0.700 2.500 V13 Q0.700 14.500 2 14.500 H15 M6 15 V18.500 M12 15 V18.500 M3.500 19 H15" />
            <path d="M14.500 0.800 H19 V6 Q19 7.500 16.800 7.500 Q14.500 7.500 14.500 6 Z M16.800 7.500 V19" />
          </svg>
        </TrayIcon>
        <TrayIcon $w={22}>
          <svg width="21" height="18" viewBox="0 0 21 18" fill="none" stroke="#fff" strokeWidth="1.300">
            <path d="M1 6 H4.500 L9 1.500 V16.500 L4.500 12 H1 Z" strokeLinejoin="round" />
            <path d="M11.500 6.500 Q13 9 11.500 11.500 M14 4 Q17 9 14 14 M17 2 Q22 9 17 16" />
          </svg>
        </TrayIcon>
        <TrayIcon $w={38}>
          <svg width="20" height="17" viewBox="0 0 20 17">
            <rect x="1.500" y="5" width="15.500" height="10.500" rx="2.500" {...stroke} strokeWidth="1.400" />
            <path d="M4 7.500 H15 V13.500 H4 Z M18 8.500 H20 V12 H18 Z" fill="#fff" />
            <path d="M3.500 0 V4 M1 5 L4.500 0 V4.500 H7 L2.500 10.500 V6 H0.500 Z" fill="#fff" stroke="#222" strokeWidth="0.500" />
          </svg>
        </TrayIcon>
        <TrayText $w={89} $align="flex-end">
          <Label $size={15.5} $track={-0.35}>12:24</Label>
          <Label $size={15.5} $track={-0.35}>26-04-2023</Label>
        </TrayText>
        <Notice>2</Notice>
      </Tray>
    </Taskbar>
  );
}

export default function App() {
  return (
    <Screen>
      <Global />
      <Browser />
      <Content />
      <WindowsBar />
    </Screen>
  );
}
